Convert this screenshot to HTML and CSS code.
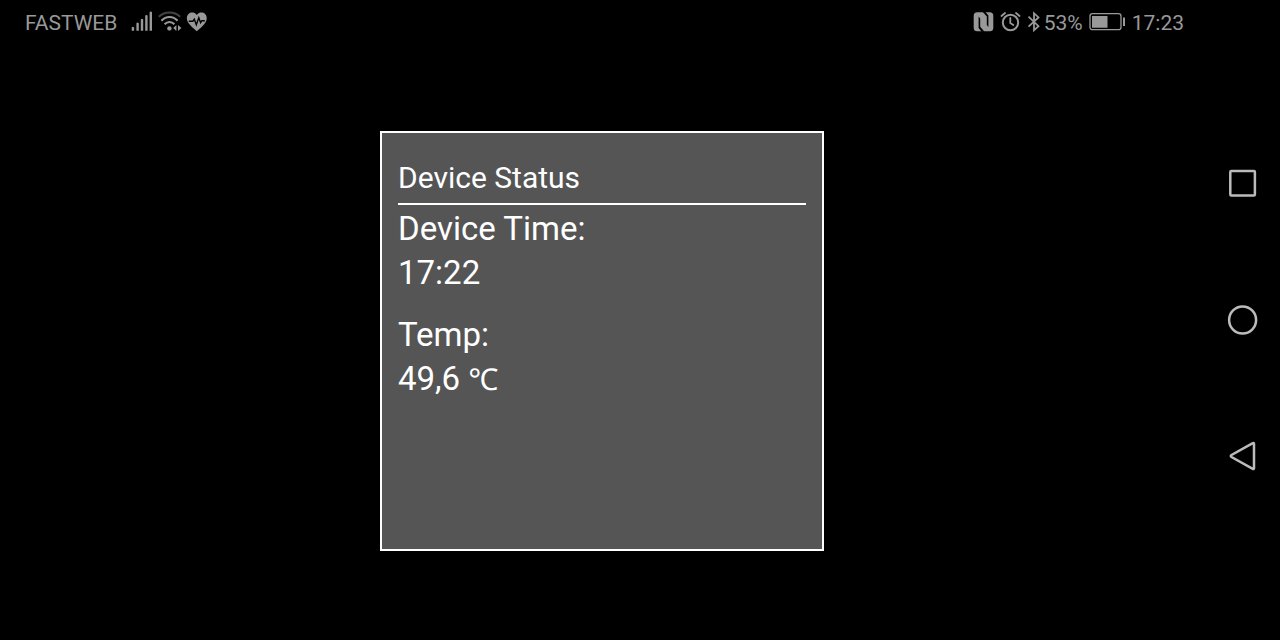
FILE: index.html
```html
<!DOCTYPE html>
<html lang="en">
<head>
<meta charset="utf-8">
<meta name="viewport" content="width=device-width, initial-scale=1">
<title>Device Status</title>
<link rel="stylesheet" href="styles.css">
</head>
<body class="screen">
<div class="content">
  <header class="status-bar">
    <div class="status-group">
      <span class="carrier">FASTWEB</span>
      <svg class="icon" width="22" height="20" viewBox="0 0 22 20" role="img" aria-label="Signal">
        <path fill="currentColor" d="M.7 16.400q1.200-1.200 2.400 0v3.300H.7zM5.400 12.200q1.200-1.200 2.400 0v7.500H5.400zM9.800 8.400q1.200-1.200 2.400 0v11.300H9.800zM14.200 4.600q1.200-1.200 2.400 0v15.100h-2.400zM18.600 1.200q1.200-1.200 2.400 0v18.500h-2.400z"/>
      </svg>
      <svg class="icon icon-wifi" width="24" height="20" viewBox="0 0 24 20" role="img" aria-label="Wi-Fi">
        <g fill="none" stroke="currentColor" stroke-width="2">
          <path stroke="#444" d="M.8 5.700C7 .1 16 .1 22.200 5.700"/>
          <path d="M3.400 9.700C8.200 4.700 14.800 4.700 19.600 9.700"/>
          <path d="M6.600 13.300C9.400 10.300 13.600 10.300 16.400 13.300"/>
        </g>
        <circle cx="11.400" cy="17.400" r="2.200" fill="currentColor"/>
        <path fill="currentColor" d="M18.400 14v6L15.200 17zM20 14v6l3.400-3z"/>
      </svg>
      <svg class="icon" width="21" height="21" viewBox="0 0 21 21" role="img" aria-label="Health">
        <path fill="currentColor" d="M10.800 3.900C9 1.400 6.800 1.200 5.300 1.500 2.300 2 .7 4.700.9 7.500c.1 2 .9 3.600 2 5 2 2.700 4.900 5.300 7.900 7.700 3-2.400 5.900-5 7.900-7.700 1.100-1.400 1.900-3 2-5 .2-2.800-1.400-5.500-4.400-6-1.500-.3-3.700-.1-5.500 2.400z"/>
        <path fill="none" stroke="#000" stroke-width="1.400" d="M2.800 10.200h4l1.500-2 2 5.500 2.500-7 1.800 5 1.200-2h3"/>
      </svg>
    </div>
    <div class="status-group status-right">
      <svg class="icon" width="21" height="21" viewBox="0 0 21 21" role="img" aria-label="NFC">
        <rect x=".7" y="1.200" width="19.600" height="19" rx="3.500" fill="currentColor"/>
        <path fill="#000" d="M5.600 5.500l1.600 2v8.300l4.300 4.900H8.700L5.600 17zM15.400 15.900l-1.600-2V5.600L9.500.7h2.800l3.100 3.700z"/>
      </svg>
      <svg class="icon" width="21" height="21" viewBox="0 0 21 21" role="img" aria-label="Alarm">
        <g fill="none" stroke="currentColor" stroke-width="2" stroke-linecap="round">
          <circle cx="10.500" cy="11.500" r="7.700"/>
          <path stroke-width="1.800" d="M10.300 7v5l3 2M1.500 5L5 2M19.500 5L16 2"/>
        </g>
      </svg>
      <svg class="icon icon-bluetooth" width="14" height="21" viewBox="0 0 14 21" role="img" aria-label="Bluetooth">
        <path fill="none" stroke="currentColor" stroke-width="1.800" d="M1.500 5.700l10 9.500L7 19.200v-17l4.500 4.200L1.500 15.700"/>
      </svg>
      <span class="battery-level">53%</span>
      <svg class="icon" width="37" height="21" viewBox="0 0 37 21" role="img" aria-label="Battery">
        <rect x="1" y="2.700" width="31" height="16" rx="2.500" fill="none" stroke="currentColor" stroke-width="1.300"/>
        <path fill="currentColor" d="M3 5h15.500v11.800H3zM34 6.500h2V15h-2z"/>
      </svg>
      <time class="clock">17:23</time>
    </div>
  </header>
  <main class="stage">
    <section class="dialog" aria-labelledby="dialog-title">
      <h1 class="dialog-title" id="dialog-title">Device Status</h1>
      <dl class="readings">
        <div class="reading"><dt>Device Time:</dt><dd>17:22</dd></div>
        <div class="reading"><dt>Temp:</dt><dd>49,6 <span class="unit">℃</span></dd></div>
      </dl>
    </section>
  </main>
</div>
<nav class="nav-bar" aria-label="System navigation">
  <button class="nav-button" type="button" aria-label="Recent apps">
    <svg width="32" height="32" viewBox="0 0 32 32"><rect x="4.300" y="3" width="24.600" height="24.600" rx="1"/></svg>
  </button>
  <button class="nav-button" type="button" aria-label="Home">
    <svg width="32" height="32" viewBox="0 0 32 32"><circle cx="16.600" cy="16" r="13.500"/></svg>
  </button>
  <button class="nav-button" type="button" aria-label="Back">
    <svg width="32" height="32" viewBox="0 0 32 32"><path d="M26.800 3.200Q28 2.500 28 4v24q0 1.500-1.200.8L5.500 17q-1.500-1 0-2z"/></svg>
  </button>
</nav>
</body>
</html>
```
FILE: styles.css
```css
* {
  box-sizing: border-box;
}

.screen {
  display: flex;
  min-height: 100vh;
  margin: 0;
  background: #000;
  font-family: Roboto, "Noto Sans", sans-serif;
}

.content {
  display: flex;
  flex: 1;
  flex-direction: column;
}

.status-bar {
  display: flex;
  justify-content: space-between;
  padding: 11px 20px 7px 25px;
  color: #999;
  font-size: 21px;
  line-height: 24px;
}

.status-group {
  display: flex;
  align-items: flex-start;
}

.icon {
  display: block;
  flex: none;
}

.carrier {
  margin-right: 14px;
}

.icon-wifi {
  margin: 0 4px 0 5px;
}

.status-right {
  gap: 6px;
}

.icon-bluetooth {
  margin-right: -3px;
}

.stage {
  display: flex;
  flex: 1;
  align-items: center;
  justify-content: center;
}

.dialog {
  width: 444px;
  max-width: 100%;
  min-height: 420px;
  padding: 24px 16px;
  border: 2px solid #fff;
  background: #555;
  color: #fff;
}

.dialog-title {
  margin: 0;
  padding-bottom: 4px;
  border-bottom: 2px solid #fff;
  font-size: 30px;
  font-weight: 400;
  line-height: 42px;
}

.readings {
  display: flex;
  flex-direction: column;
  gap: 18px;
  margin: 2px 0 0;
  font-size: 33px;
  line-height: 44px;
}

.reading dd {
  margin: 0;
}

.unit {
  font-size: 30px;
  line-height: 1;
}

.nav-bar {
  display: flex;
  flex: none;
  flex-direction: column;
  align-items: center;
  justify-content: center;
  gap: 104px;
  width: 76px;
}

.nav-button {
  display: block;
  padding: 0;
  border: 0;
  background: none;
  color: #bbb;
}

.nav-button svg {
  display: block;
  fill: none;
  stroke: currentColor;
  stroke-width: 2.5px;
}
```
